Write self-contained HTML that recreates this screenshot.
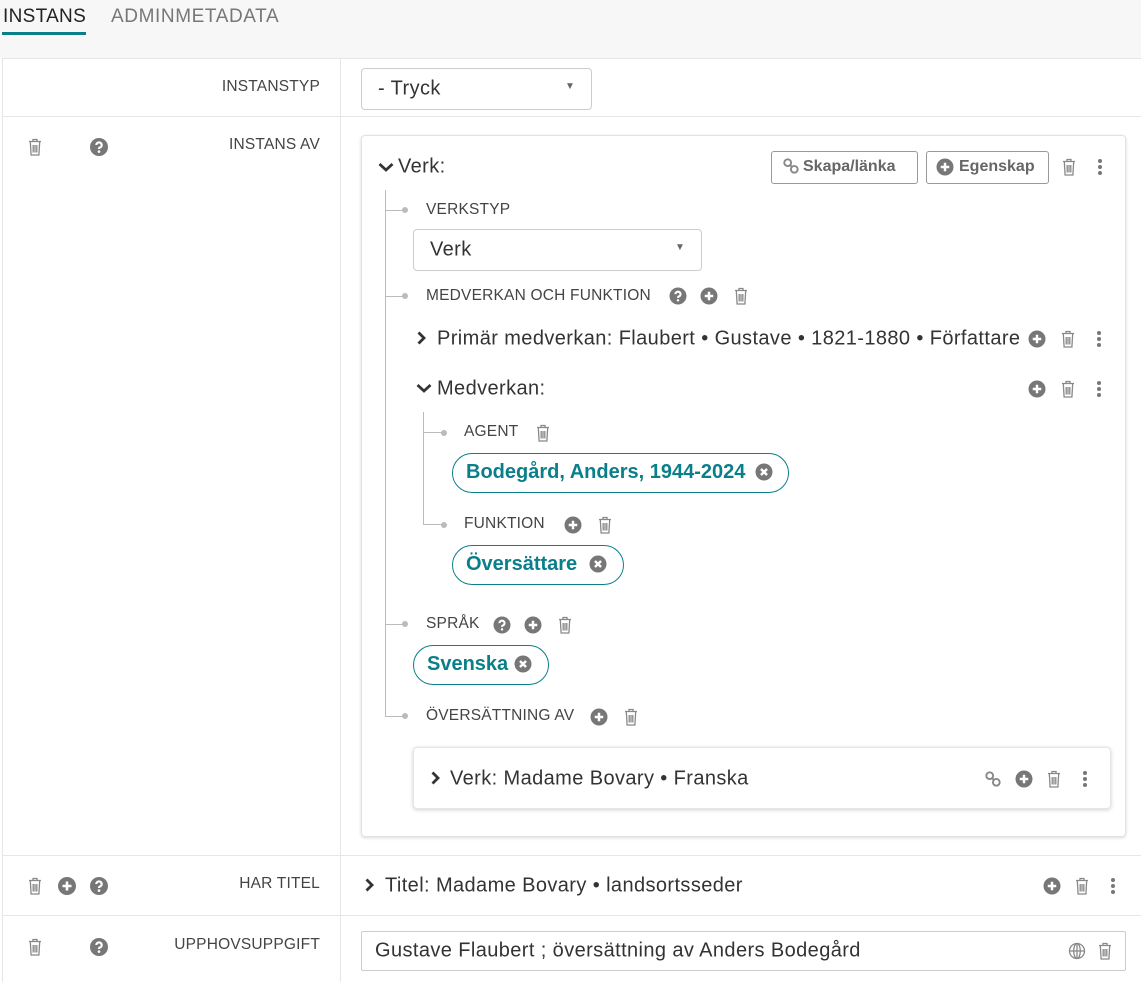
<!DOCTYPE html>
<html><head><meta charset="utf-8">
<style>
*{box-sizing:border-box;margin:0;padding:0}
body{width:1141px;height:982px;overflow:hidden;background:#fff;font-family:"Liberation Sans",sans-serif;color:#333;position:relative}
.a{position:absolute;white-space:nowrap}
.c{position:absolute;transform:translate(-50%,-50%);line-height:0}
.lbl{position:absolute;font-size:15.5px;color:#444;transform:translateY(-50%);white-space:nowrap;letter-spacing:0.2px}
.rl{position:absolute;right:821px;font-size:15.5px;color:#444;transform:translateY(-50%);white-space:nowrap;letter-spacing:0.2px}
.t20{position:absolute;font-size:20px;color:#333;transform:translateY(-50%);white-space:nowrap;letter-spacing:0.4px}
.hl{position:absolute;background:#e6e6e6;height:1px}
.vl{position:absolute;background:#e6e6e6;width:1px}
.tv{position:absolute;background:#bbb;width:1px}
.th{position:absolute;background:#bbb;height:1px}
.dot{position:absolute;width:6px;height:6px;border-radius:50%;background:#bbb;transform:translate(-50%,-50%)}
.sel{position:absolute;border:1px solid #ccc;border-radius:4px;background:#fff}
.pill{position:absolute;border:1.5px solid #0a7f8a;border-radius:20px;color:#0a7f8a;font-weight:bold;font-size:20px;line-height:36px;padding-left:13px;white-space:nowrap}
.btn{position:absolute;border:1px solid #999;border-radius:3px;font-size:16px;font-weight:bold;color:#666;line-height:30px;white-space:nowrap}
</style></head><body>
<svg width="0" height="0" style="position:absolute">
<defs>
<symbol id="tr" viewBox="0 0 14 18"><path d="M1 3.5h12M5 3.5V1.5h4v2M2.3 3.5l0.8 13.5h7.8l0.8-13.5M5.2 7v7.5M7 7v7.5M8.8 7v7.5" stroke="#888" fill="none" stroke-width="1.3"/></symbol>
<symbol id="q" viewBox="0 0 18 18"><circle cx="9" cy="9" r="9" fill="#777"/><path d="M6.3 7a2.7 2.6 0 1 1 3.6 2.5c-.7.3-.9.7-.9 1.5" stroke="#fff" stroke-width="2.2" fill="none"/><circle cx="9" cy="13.6" r="1.3" fill="#fff"/></symbol>
<symbol id="p" viewBox="0 0 18 18"><circle cx="9" cy="9" r="9" fill="#777"/><path d="M9 4.5v9M4.5 9h9" stroke="#fff" stroke-width="2.6"/></symbol>
<symbol id="x" viewBox="0 0 18 18"><circle cx="9" cy="9" r="9" fill="#777"/><path d="M5.8 5.8l6.4 6.4M12.2 5.8l-6.4 6.4" stroke="#fff" stroke-width="2.6"/></symbol>
<symbol id="k" viewBox="0 0 4 18"><circle cx="2" cy="3" r="2" fill="#777"/><circle cx="2" cy="9" r="2" fill="#777"/><circle cx="2" cy="15" r="2" fill="#777"/></symbol>
<symbol id="ln" viewBox="0 0 18 18"><circle cx="5.5" cy="5.5" r="3.6" stroke="#888" stroke-width="2" fill="none"/><circle cx="12.5" cy="12.5" r="3.6" stroke="#888" stroke-width="2" fill="none"/><path d="M8 8l2 2" stroke="#888" stroke-width="2"/></symbol>
<symbol id="ch" viewBox="0 0 12 14"><path d="M3.5 1.5l5.5 5.5-5.5 5.5" stroke="#333" stroke-width="2.8" fill="none"/></symbol>
<symbol id="cd" viewBox="0 0 16 12"><path d="M1.5 3l6.5 6 6.5-6" stroke="#333" stroke-width="2.8" fill="none"/></symbol>
<symbol id="gl" viewBox="0 0 18 18"><circle cx="9" cy="9" r="7.5" stroke="#888" stroke-width="1.3" fill="none"/><ellipse cx="9" cy="9" rx="3.3" ry="7.5" stroke="#888" stroke-width="1.3" fill="none"/><path d="M1.5 9h15M9 1.5v15" stroke="#888" stroke-width="1.3"/></symbol>
</defs></svg>

<div class="a" style="left:0;top:0;width:1141px;height:58px;background:#f7f7f7"></div>
<div class="a" style="left:3px;top:6px;font-size:19px;color:#222;letter-spacing:0.3px">INSTANS</div>
<div class="a" style="left:2px;top:32px;width:84px;height:3px;background:#0a7f8a"></div>
<div class="a" style="left:111px;top:6px;font-size:19px;color:#777;letter-spacing:0.6px">ADMINMETADATA</div>

<div class="hl" style="left:2px;top:58px;width:1139px"></div>
<div class="hl" style="left:2px;top:116px;width:1139px"></div>
<div class="hl" style="left:2px;top:855px;width:1139px"></div>
<div class="hl" style="left:2px;top:915px;width:1139px"></div>
<div class="vl" style="left:2px;top:58px;height:924px"></div>
<div class="vl" style="left:340px;top:58px;height:924px"></div>

<div class="rl" style="top:87px">INSTANSTYP</div>
<div class="sel" style="left:361px;top:68px;width:231px;height:42px"></div>
<div class="t20" style="left:378px;top:89px">- Tryck</div>
<div class="a" style="left:565px;top:81px;font-size:10px;color:#666">▼</div>

<div class="c" style="left:35px;top:147px"><svg width="14" height="18"><use href="#tr"/></svg></div>
<div class="c" style="left:99px;top:147px"><svg width="18" height="18"><use href="#q"/></svg></div>
<div class="rl" style="top:145px">INSTANS AV</div>

<div class="a" style="left:361px;top:135px;width:765px;height:702px;border:1px solid #e2e2e2;border-radius:4px;box-shadow:0 1px 3px rgba(0,0,0,.15);background:#fff"></div>
<div class="c" style="left:386px;top:167px"><svg width="16" height="12"><use href="#cd"/></svg></div>
<div class="t20" style="left:398px;top:167px">Verk:</div>
<div class="btn" style="left:771px;top:151px;width:147px;height:33px;padding-left:31px">Skapa/länka</div>
<div class="c" style="left:791px;top:166px"><svg width="17" height="17"><use href="#ln"/></svg></div>
<div class="btn" style="left:926px;top:151px;width:123px;height:33px;padding-left:32px">Egenskap</div>
<div class="c" style="left:945px;top:167px"><svg width="17" height="17"><use href="#p"/></svg></div>
<div class="c" style="left:1069px;top:167px"><svg width="14" height="18"><use href="#tr"/></svg></div>
<div class="c" style="left:1100px;top:167px"><svg width="4" height="18"><use href="#k"/></svg></div>

<div class="tv" style="left:385px;top:190px;height:526px"></div>
<div class="th" style="left:385px;top:210px;width:20px"></div><div class="dot" style="left:405px;top:210px"></div>
<div class="th" style="left:385px;top:296px;width:20px"></div><div class="dot" style="left:405px;top:296px"></div>
<div class="th" style="left:385px;top:624px;width:20px"></div><div class="dot" style="left:405px;top:624px"></div>
<div class="th" style="left:385px;top:716px;width:20px"></div><div class="dot" style="left:405px;top:716px"></div>

<div class="lbl" style="left:426px;top:210px">VERKSTYP</div>
<div class="sel" style="left:413px;top:229px;width:289px;height:42px"></div>
<div class="t20" style="left:430px;top:250px">Verk</div>
<div class="a" style="left:675px;top:242px;font-size:10px;color:#666">▼</div>

<div class="lbl" style="left:426px;top:296px">MEDVERKAN OCH FUNKTION</div>
<div class="c" style="left:678px;top:296px"><svg width="17" height="17"><use href="#q"/></svg></div>
<div class="c" style="left:709px;top:296px"><svg width="17" height="17"><use href="#p"/></svg></div>
<div class="c" style="left:741px;top:296px"><svg width="14" height="18"><use href="#tr"/></svg></div>

<div class="c" style="left:421px;top:338px"><svg width="12" height="14"><use href="#ch"/></svg></div>
<div class="t20" style="left:437px;top:339px">Primär medverkan: Flaubert • Gustave • 1821-1880 • Författare</div>
<div class="c" style="left:1037px;top:339px"><svg width="17" height="17"><use href="#p"/></svg></div>
<div class="c" style="left:1068px;top:339px"><svg width="14" height="18"><use href="#tr"/></svg></div>
<div class="c" style="left:1099px;top:339px"><svg width="4" height="18"><use href="#k"/></svg></div>

<div class="c" style="left:424px;top:388px"><svg width="16" height="12"><use href="#cd"/></svg></div>
<div class="t20" style="left:437px;top:389px">Medverkan:</div>
<div class="c" style="left:1037px;top:389px"><svg width="17" height="17"><use href="#p"/></svg></div>
<div class="c" style="left:1068px;top:389px"><svg width="14" height="18"><use href="#tr"/></svg></div>
<div class="c" style="left:1099px;top:389px"><svg width="4" height="18"><use href="#k"/></svg></div>

<div class="tv" style="left:423px;top:412px;height:113px"></div>
<div class="th" style="left:423px;top:432px;width:21px"></div><div class="dot" style="left:444px;top:433px"></div>
<div class="th" style="left:423px;top:524px;width:21px"></div><div class="dot" style="left:444px;top:525px"></div>

<div class="lbl" style="left:464px;top:432px">AGENT</div>
<div class="c" style="left:543px;top:433px"><svg width="14" height="18"><use href="#tr"/></svg></div>
<div class="pill" style="left:452px;top:453px;width:337px;height:40px">Bodegård, Anders, 1944-2024</div>
<div class="c" style="left:764px;top:472px"><svg width="17" height="17"><use href="#x"/></svg></div>

<div class="lbl" style="left:464px;top:524px">FUNKTION</div>
<div class="c" style="left:573px;top:525px"><svg width="17" height="17"><use href="#p"/></svg></div>
<div class="c" style="left:605px;top:525px"><svg width="14" height="18"><use href="#tr"/></svg></div>
<div class="pill" style="left:452px;top:545px;width:172px;height:40px">Översättare</div>
<div class="c" style="left:598px;top:564px"><svg width="17" height="17"><use href="#x"/></svg></div>

<div class="lbl" style="left:426px;top:624px">SPRÅK</div>
<div class="c" style="left:502px;top:625px"><svg width="17" height="17"><use href="#q"/></svg></div>
<div class="c" style="left:533px;top:625px"><svg width="17" height="17"><use href="#p"/></svg></div>
<div class="c" style="left:565px;top:625px"><svg width="14" height="18"><use href="#tr"/></svg></div>
<div class="pill" style="left:413px;top:645px;width:136px;height:40px">Svenska</div>
<div class="c" style="left:523px;top:664px"><svg width="17" height="17"><use href="#x"/></svg></div>

<div class="lbl" style="left:426px;top:716px">ÖVERSÄTTNING AV</div>
<div class="c" style="left:599px;top:717px"><svg width="17" height="17"><use href="#p"/></svg></div>
<div class="c" style="left:631px;top:717px"><svg width="14" height="18"><use href="#tr"/></svg></div>

<div class="a" style="left:413px;top:747px;width:698px;height:62px;border:1px solid #e6e6e6;border-radius:4px;box-shadow:0 1px 4px rgba(0,0,0,.18);background:#fff"></div>
<div class="c" style="left:435px;top:778px"><svg width="12" height="14"><use href="#ch"/></svg></div>
<div class="t20" style="left:450px;top:779px">Verk: Madame Bovary • Franska</div>
<div class="c" style="left:993px;top:779px"><svg width="17" height="17"><use href="#ln"/></svg></div>
<div class="c" style="left:1024px;top:779px"><svg width="17" height="17"><use href="#p"/></svg></div>
<div class="c" style="left:1054px;top:779px"><svg width="14" height="18"><use href="#tr"/></svg></div>
<div class="c" style="left:1085px;top:779px"><svg width="4" height="18"><use href="#k"/></svg></div>

<div class="c" style="left:35px;top:886px"><svg width="14" height="18"><use href="#tr"/></svg></div>
<div class="c" style="left:67px;top:886px"><svg width="18" height="18"><use href="#p"/></svg></div>
<div class="c" style="left:99px;top:886px"><svg width="18" height="18"><use href="#q"/></svg></div>
<div class="rl" style="top:884px">HAR TITEL</div>
<div class="c" style="left:369px;top:885px"><svg width="12" height="14"><use href="#ch"/></svg></div>
<div class="t20" style="left:385px;top:886px">Titel: Madame Bovary • landsortsseder</div>
<div class="c" style="left:1052px;top:886px"><svg width="17" height="17"><use href="#p"/></svg></div>
<div class="c" style="left:1082px;top:886px"><svg width="14" height="18"><use href="#tr"/></svg></div>
<div class="c" style="left:1113px;top:886px"><svg width="4" height="18"><use href="#k"/></svg></div>

<div class="c" style="left:35px;top:947px"><svg width="14" height="18"><use href="#tr"/></svg></div>
<div class="c" style="left:99px;top:947px"><svg width="18" height="18"><use href="#q"/></svg></div>
<div class="rl" style="top:945px">UPPHOVSUPPGIFT</div>
<div class="a" style="left:361px;top:931px;width:765px;height:40px;border:1px solid #ccc;border-radius:2px"></div>
<div class="t20" style="left:375px;top:951px">Gustave Flaubert ; översättning av Anders Bodegård</div>
<div class="c" style="left:1077px;top:951px"><svg width="18" height="18"><use href="#gl"/></svg></div>
<div class="c" style="left:1105px;top:951px"><svg width="14" height="18"><use href="#tr"/></svg></div>
</body></html>
